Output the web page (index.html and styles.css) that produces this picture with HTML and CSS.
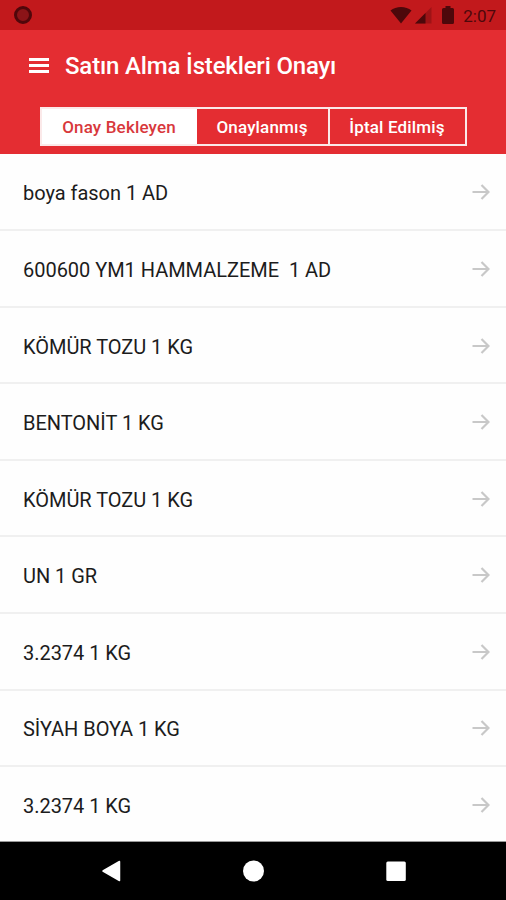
FILE: index.html
```html
<!DOCTYPE html>
<html lang="tr">
<head>
    <meta charset="UTF-8">
    <meta name="viewport" content="width=device-width, initial-scale=1.0">
    <title>Satın Alma İstekleri Onayı</title>
    <link rel="stylesheet" href="styles.css">
</head>
<body>

    <div class="status-bar">
        <span class="status-circle"></span>
        <div class="status-icons">
            <svg class="wifi" width="22" height="18" viewBox="0 0 22 18"><path d="M0.5 4.5 C6 -0.3 16 -0.3 21.5 4.5 L11 17.5 Z"/></svg>
            <svg class="signal" width="17" height="17" viewBox="0 0 17 17"><path d="M0 16.5 L16.5 0 V16.5 Z" opacity="0.3"/><path d="M0 16.5 L10.5 6 V16.5 Z"/></svg>
            <svg class="battery" width="12" height="18" viewBox="0 0 12 18"><path d="M3.5 0 H8.5 V2 H10.5 Q12 2 12 3.5 V16.5 Q12 18 10.5 18 H1.5 Q0 18 0 16.5 V3.5 Q0 2 1.5 2 H3.5 Z"/></svg>
            <span class="clock">2:07</span>
        </div>
    </div>

    <header class="header">
        <div class="toolbar">
            <a href="#" class="menu">
                <span></span>
                <span></span>
                <span></span>
            </a>
            <h1>Satın Alma İstekleri Onayı</h1>
        </div>
        <div class="tabs">
            <a href="#" class="tab active">Onay Bekleyen</a>
            <a href="#" class="tab">Onaylanmış</a>
            <a href="#" class="tab">İptal Edilmiş</a>
        </div>
    </header>

    <ul class="list">
        <li>
            <span>boya fason 1 AD</span>
            <svg class="arrow" viewBox="0 0 18 16"><path d="M0.5 8 H16.5 M9.5 1 L16.5 8 L9.5 15"/></svg>
        </li>
        <li>
            <span>600600 YM1 HAMMALZEME&nbsp; 1 AD</span>
            <svg class="arrow" viewBox="0 0 18 16"><path d="M0.5 8 H16.5 M9.5 1 L16.5 8 L9.5 15"/></svg>
        </li>
        <li>
            <span>KÖMÜR TOZU 1 KG</span>
            <svg class="arrow" viewBox="0 0 18 16"><path d="M0.5 8 H16.5 M9.5 1 L16.5 8 L9.5 15"/></svg>
        </li>
        <li>
            <span>BENTONİT 1 KG</span>
            <svg class="arrow" viewBox="0 0 18 16"><path d="M0.5 8 H16.5 M9.5 1 L16.5 8 L9.5 15"/></svg>
        </li>
        <li>
            <span>KÖMÜR TOZU 1 KG</span>
            <svg class="arrow" viewBox="0 0 18 16"><path d="M0.5 8 H16.5 M9.5 1 L16.5 8 L9.5 15"/></svg>
        </li>
        <li>
            <span>UN 1 GR</span>
            <svg class="arrow" viewBox="0 0 18 16"><path d="M0.5 8 H16.5 M9.5 1 L16.5 8 L9.5 15"/></svg>
        </li>
        <li>
            <span>3.2374 1 KG</span>
            <svg class="arrow" viewBox="0 0 18 16"><path d="M0.5 8 H16.5 M9.5 1 L16.5 8 L9.5 15"/></svg>
        </li>
        <li>
            <span>SİYAH BOYA 1 KG</span>
            <svg class="arrow" viewBox="0 0 18 16"><path d="M0.5 8 H16.5 M9.5 1 L16.5 8 L9.5 15"/></svg>
        </li>
        <li>
            <span>3.2374 1 KG</span>
            <svg class="arrow" viewBox="0 0 18 16"><path d="M0.5 8 H16.5 M9.5 1 L16.5 8 L9.5 15"/></svg>
        </li>
    </ul>

    <nav class="nav-bar">
        <svg width="20" height="22" viewBox="0 0 20 22"><path d="M2 11 L18.5 1.5 V20.5 Z" stroke="#fff" stroke-width="1.5" stroke-linejoin="round"/></svg>
        <svg width="22" height="22" viewBox="0 0 22 22"><circle cx="10.5" cy="11" r="10.5"/></svg>
        <svg width="20" height="20" viewBox="0 0 20 20"><rect x="0.3" y="0.5" width="19.5" height="19.5" rx="1.5"/></svg>
    </nav>

</body>
</html>
```

FILE: styles.css
```css
* {
    margin: 0;
    padding: 0;
    box-sizing: border-box;
    font-family: Roboto, sans-serif;
}

body {
    height: 900px;
    display: flex;
    flex-direction: column;
    overflow: hidden;
    background-color: #fefefe;
}

a {
    text-decoration: none;
}

.status-bar {
    height: 30px;
    padding: 0 10px 0 14px;
    display: flex;
    justify-content: space-between;
    align-items: center;
    background-color: #c2191c;
}

.status-circle {
    width: 18px;
    height: 18px;
    border: 3px solid #50070b;
    border-radius: 50%;
    background-color: #8b1418;
}

.status-icons {
    display: flex;
    align-items: center;
    fill: #4d080b;
}

.signal {
    margin-left: 3px;
}

.battery {
    margin-left: 10px;
}

.clock {
    margin-left: 9px;
    font-size: 17px;
    line-height: 30px;
    padding-top: 1px;
    color: #4d080b;
}

.header {
    height: 124px;
    background-color: #e42d32;
}

.toolbar {
    height: 77px;
    padding: 0 29px 5px;
    display: flex;
    align-items: center;
}

.menu {
    width: 20px;
    padding-bottom: 2px;
    display: flex;
    flex-direction: column;
    gap: 3px;
}

.menu span {
    height: 3px;
    background-color: #fff;
}

.toolbar h1 {
    margin-left: 16px;
    font-size: 24px;
    font-weight: 500;
    letter-spacing: -0.17px;
    color: #fff;
    white-space: nowrap;
}

.tabs {
    width: 427px;
    height: 39px;
    margin-left: 40px;
    display: grid;
    grid-template-columns: 155px 133px 1fr;
    border: 2px solid #fbe9e9;
}

.tab {
    display: flex;
    justify-content: center;
    align-items: center;
    padding-right: 1px;
    font-size: 17px;
    font-weight: 500;
    letter-spacing: 0.16px;
    color: #fff;
    white-space: nowrap;
}

.tab + .tab {
    border-right: 2px solid #fbe9e9;
}

.tab:last-child {
    border-right: none;
}

.tab.active {
    background-color: #fff;
    color: #d8383c;
}

.list {
    height: 688px;
    padding-top: 0.7px;
    list-style: none;
    overflow: hidden;
    border-bottom: 1px solid #999;
}

.list li {
    height: 76.55px;
    padding: 1px 16px 0 23px;
    display: flex;
    justify-content: space-between;
    align-items: center;
    border-bottom: 2px solid #f0f0f0;
    font-size: 20px;
    letter-spacing: -0.03px;
    color: #1c1c1c;
}

.list span {
    padding-top: 2px;
}

.arrow {
    width: 18px;
    height: 16px;
    fill: none;
    stroke: #c8c8c8;
    stroke-width: 2.2;
}

.nav-bar {
    height: 58px;
    padding: 0 100px 0 101px;
    display: flex;
    justify-content: space-between;
    align-items: center;
    background-color: #000;
    fill: #fff;
}
```
